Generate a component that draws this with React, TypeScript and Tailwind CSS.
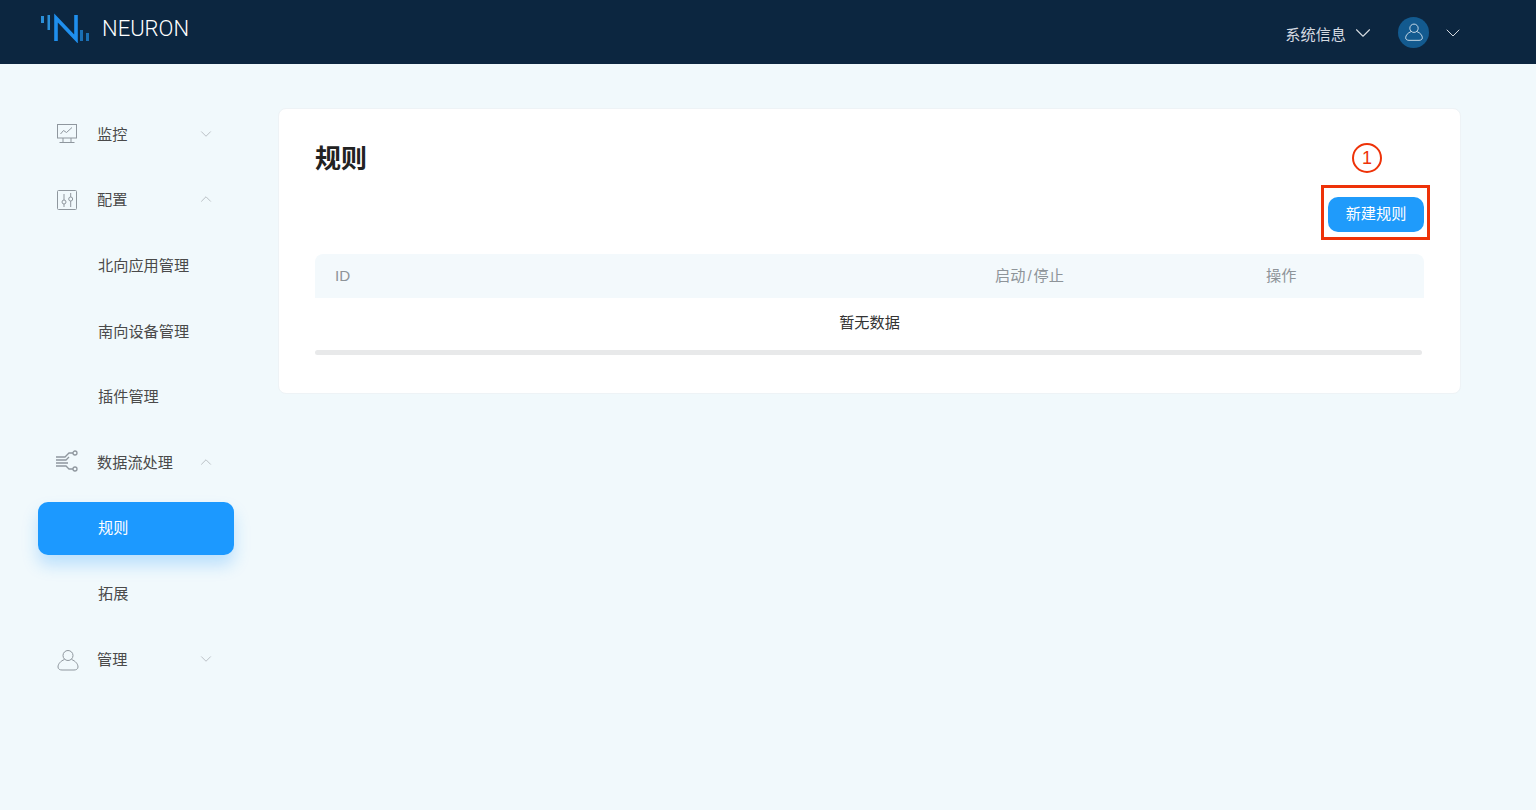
import { ChevronDown, ChevronUp } from "lucide-react";

function LogoMark() {
  return (
    <svg width="50" height="30" viewBox="0 0 50 30" fill="none">
      <rect x="1" y="3" width="3" height="7" fill="#2a8fd8" />
      <rect x="7.500" y="2" width="2.500" height="15" fill="#2a8fd8" />
      <path d="M16 28V5L36 26V2" stroke="#1f8fee" strokeWidth="3.6" />
      <rect x="40" y="17" width="3" height="11" fill="#1a6fb5" />
      <rect x="46" y="20" width="3" height="8" fill="#1a6fb5" />
    </svg>
  );
}

function UserIcon({ className, color }: { className: string; color: string }) {
  return (
    <svg className={className} viewBox="0 0 24 24" fill="none" stroke={color} strokeWidth="1">
      <circle cx="12" cy="7.5" r="5" />
      <path d="M8.5 11.5C4.5 13 2 16 2 19c0 2.2 2 3 4 3h12c2 0 4-.8 4-3 0-3-2.500-6-6.500-7.500" />
    </svg>
  );
}

function MonitorIcon() {
  return (
    <svg className="w-[22px] h-[22px]" viewBox="0 0 22 22" fill="none" stroke="#8f979e" strokeWidth="1">
      <rect x="1.500" y="1.500" width="19" height="13.500" />
      <path d="M4.500 11l3-3.500 3 2 5.500-5" />
      <path d="M7 15v4M15 15v4M3.500 19.500h15" />
    </svg>
  );
}

function SlidersIcon() {
  return (
    <svg className="w-[22px] h-[22px]" viewBox="0 0 22 22" fill="none" stroke="#8f979e" strokeWidth="1">
      <rect x="1.500" y="1.500" width="19" height="19" rx="1" />
      <path d="M8 5v6M8 15v3M14.700 4v4M14.700 12v6" />
      <circle cx="8" cy="13" r="2" />
      <circle cx="14.700" cy="10" r="2" />
    </svg>
  );
}

function FlowIcon() {
  return (
    <svg className="w-[24px] h-[24px] -ml-[1px]" viewBox="0 0 24 24" fill="none" stroke="#8f979e" strokeWidth="1.3">
      <circle cx="20" cy="3" r="2" />
      <circle cx="20" cy="19" r="2" />
      <path d="M18 3h-4l-4 4H1M1 10h10l3-3M1 13h12M1 16h10l3 3h4" />
    </svg>
  );
}

type NavItem = {
  label: string;
  icon?: React.ReactNode;
  open?: boolean;
  active?: boolean;
};

const nav: NavItem[] = [
  { label: "监控", icon: <MonitorIcon />, open: false },
  { label: "配置", icon: <SlidersIcon />, open: true },
  { label: "北向应用管理" },
  { label: "南向设备管理" },
  { label: "插件管理" },
  { label: "数据流处理", icon: <FlowIcon />, open: true },
  { label: "规则", active: true },
  { label: "拓展" },
  { label: "管理", icon: <UserIcon className="w-[24px] h-[24px]" color="#8f979e" />, open: false },
];

function SidebarRow({ item }: { item: NavItem }) {
  if (!item.icon) {
    return (
      <div
        className={
          item.active
            ? "h-[53px] flex items-center pl-[60px] rounded-[10px] bg-[#1c99ff] text-white text-[15.2px] shadow-[0_10px_16px_rgba(28,153,255,0.25)]"
            : "h-[53px] flex items-center pl-[60px] text-[#4a4a4a] text-[15.2px]"
        }
      >
        <span className={item.active ? "" : "pt-[2px]"}>{item.label}</span>
      </div>
    );
  }
  return (
    <div className="h-[53px] flex items-center text-[#4a4a4a] text-[15.2px]">
      <div className="w-[59px] pl-[18px] flex items-center">{item.icon}</div>
      <span className="flex-1 pt-[2px]">{item.label}</span>
      {item.open ? (
        <ChevronUp className="w-[18px] h-[18px] mr-[19px] -mt-[1px] text-[#a8aeb3]" strokeWidth={1} />
      ) : (
        <ChevronDown className="w-[18px] h-[18px] mr-[19px] -mt-[1px] text-[#a8aeb3]" strokeWidth={1} />
      )}
    </div>
  );
}

export default function App() {
  return (
    <div
      className="min-h-[810px] bg-[#f1f9fc] flex flex-col"
      style={{ fontFamily: '"Liberation Sans", "Noto Sans CJK SC", sans-serif' }}
    >
      <header className="h-16 bg-[#0c2640] flex items-center justify-between pl-[40px] pr-[71px]">
        <div className="flex items-center -mt-[8px]">
          <LogoMark />
          <span className="ml-[12px] mt-[1px] text-white text-[22px] font-['Roboto'] font-light">NEURON</span>
        </div>
        <div className="flex items-center text-[#d5dae0] text-[15.2px]">
          <span className="pt-[6px]">系统信息</span>
          <ChevronDown className="w-[26px] h-[26px] ml-[4px] mt-[2px]" strokeWidth={1} />
          <div className="ml-[22px] w-[31px] h-[31px] rounded-full bg-[#135a8f] flex items-center justify-center">
            <UserIcon className="w-[20px] h-[20px]" color="#e6eef5" />
          </div>
          <ChevronDown className="w-[24px] h-[24px] ml-[12px] mt-[2px]" strokeWidth={1} />
        </div>
      </header>

      <div className="flex flex-1">
        <aside className="w-[278px] pt-[43.5px] pl-[38px] pr-[44px] flex flex-col gap-[12.7px] shrink-0">
          {nav.map((item) => (
            <SidebarRow key={item.label} item={item} />
          ))}
        </aside>

        <main className="flex-1 pt-[44px] pr-[75px]">
          <div className="relative h-[286px] bg-white rounded-[8px] border border-[#eef3f6] px-[36px]">
            <h1 className="pt-[31px] text-[26px] leading-[38px] font-bold text-[#222222]">规则</h1>
            <div className="flex justify-end mt-[19px]">
              <button className="w-[96px] h-[35px] rounded-[10px] bg-[#1f9bfb] text-white text-[15.2px]">
                新建规则
              </button>
            </div>
            <div className="mt-[22px] h-[44px] grid grid-cols-[660px_271px_1fr] items-center pl-[20px] bg-[#f3f9fc] rounded-t-[8px] text-[#8e9499] text-[15.2px]">
              <span>ID</span>
              <span>
                启动<span className="px-[2px]">/</span>停止
              </span>
              <span>操作</span>
            </div>
            <div className="h-[52px] pt-[15px] text-center text-[15.2px] leading-[20px] text-[#333333]">暂无数据</div>
            <div className="h-[5px] mr-[2px] rounded-full bg-[#e8e9ea]" />

            {/* annotation overlay */}
            <div className="absolute left-[1073px] top-[34px] w-[30px] h-[30px] rounded-full border-2 border-[#ee3208] flex items-center justify-center text-[#ee3208] text-[18px]">
              1
            </div>
            <div className="absolute left-[1042px] top-[76px] w-[109px] h-[55px] border-[3px] border-[#ee3208]" />
          </div>
        </main>
      </div>
    </div>
  );
}
